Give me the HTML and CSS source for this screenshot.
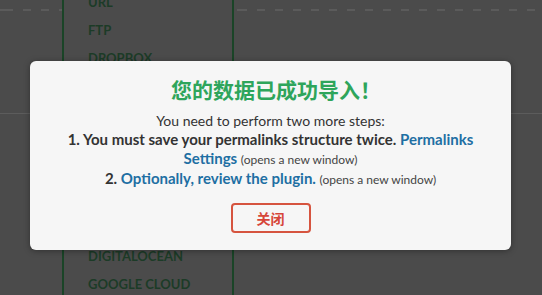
FILE: index.html
```html
<!DOCTYPE html>
<html lang="zh">
<head>
<meta charset="utf-8">
<title>Import</title>
<link rel="stylesheet" href="styles.css">
</head>
<body>
<div class="page">
  <div class="pane pane-left">
    <div class="dash"></div>
    <div class="rule"></div>
  </div>
  <nav class="sidebar">
    <ul class="menu">
      <li>URL</li>
      <li>FTP</li>
      <li>DROPBOX</li>
      <li>GOOGLE DRIVE</li>
      <li>ONEDRIVE</li>
      <li>AMAZON S3</li>
      <li>BACKBLAZE</li>
      <li>WASABI</li>
      <li>PCLOUD</li>
      <li>DIGITALOCEAN</li>
      <li>GOOGLE CLOUD</li>
    </ul>
  </nav>
  <div class="pane pane-main">
    <div class="dash"></div>
    <div class="rule"></div>
  </div>
</div>

<div class="modal">
  <h2 class="modal-title">您的数据已成功导入！</h2>
  <p class="modal-text">You need to perform two more steps:</p>
  <p class="modal-text strong">1. You must save your permalinks structure twice. <a class="link" href="#">Permalinks Settings</a> <span class="note">(opens a new window)</span></p>
  <p class="modal-text strong">2. <a class="link" href="#">Optionally, review the plugin.</a> <span class="note">(opens a new window)</span></p>
  <div class="actions">
    <button class="btn-close" type="button">关闭</button>
  </div>
</div>
</body>
</html>
```

FILE: styles.css
```css
html, body {
  margin: 0;
  padding: 0;
  height: 100%;
  overflow: hidden;
}

body {
  background: #4b4b4b;
  font-family: "Lato", "Noto Sans CJK SC", sans-serif;
}

.page {
  display: flex;
  height: 100%;
}

.pane {
  display: flex;
  flex-direction: column;
}

.pane-left {
  width: 62px;
}

.pane-main {
  flex: 1;
}

.dash {
  margin-top: 9px;
  height: 2px;
  background: repeating-linear-gradient(90deg, #5b5b5b 0 8px, transparent 8px 18px);
  background-position: 5px 0;
}

.rule {
  margin-top: 102px;
  height: 1px;
  background: #5c5c5c;
}

.sidebar {
  width: 168px;
  border-left: 2px solid #1a4427;
  border-right: 2px solid #1a4427;
  background: #4b4b4b;
}

.menu {
  list-style: none;
  margin: -12px 0 0 0;
  padding: 0 0 0 24px;
}

.menu li {
  font-weight: 700;
  font-size: 13px;
  line-height: 28.2px;
  color: #1c3b27;
}

.modal {
  position: absolute;
  top: 61px;
  left: 30px;
  width: 481px;
  box-sizing: border-box;
  padding: 13px 20px 17px;
  background: #f6f6f6;
  border-radius: 6px;
  box-shadow: 0 1px 6px rgba(0, 0, 0, 0.35);
  text-align: center;
}

.modal-title {
  margin: 0 0 7px;
  padding-left: 11px;
  font-family: "Noto Sans CJK SC", sans-serif;
  font-size: 21px;
  line-height: 30px;
  font-weight: 700;
  color: #2ea55b;
}

.modal-text {
  margin: 0;
  font-size: 14px;
  line-height: 19px;
  color: #333333;
}

.strong {
  font-weight: 700;
  font-size: 15px;
}

.link {
  color: #1e6fa3;
  text-decoration: none;
  font-weight: 700;
}

.note {
  font-weight: 400;
  font-size: 12px;
  color: #444444;
}

.actions {
  display: flex;
  justify-content: center;
  margin-top: 14px;
}

.btn-close {
  width: 80px;
  height: 30px;
  box-sizing: border-box;
  border: 2px solid #d6543f;
  border-radius: 4px;
  background: #f6f6f6;
  color: #d6463a;
  font-family: "Noto Sans CJK SC", sans-serif;
  font-size: 14px;
  font-weight: 700;
  padding: 0;
}
```
